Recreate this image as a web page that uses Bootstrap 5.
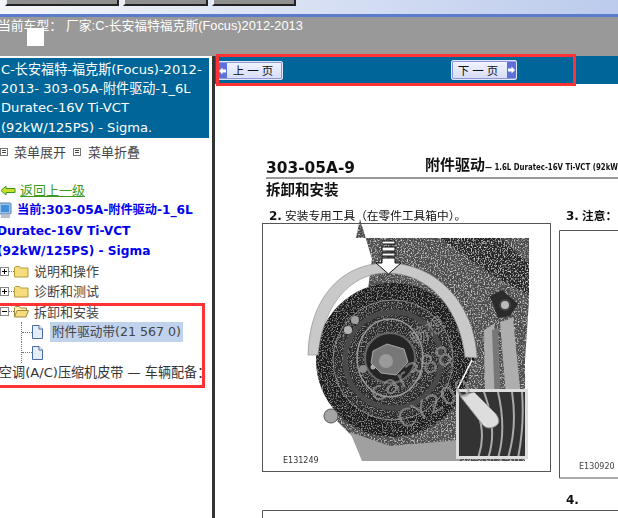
<!DOCTYPE html>
<html lang="zh">
<head>
<meta charset="utf-8">
<title>维修手册</title>
<link href="https://cdn.jsdelivr.net/npm/bootstrap@5.3.0/dist/css/bootstrap.min.css" rel="stylesheet">
<style>
html,body{margin:0;height:518px;overflow:hidden;background:#fff}
body{font-family:"DejaVu Sans","Noto Sans CJK SC",sans-serif;font-size:13px;color:#333;position:relative}
.topstrip{height:14px;background:linear-gradient(90deg,#f4f6fc,#bccbec)}
.topkey{height:6px;background:#8f8f8f;border:2px solid #222;border-top:0;border-left-color:#eee}
.k1{width:114px;margin-left:5px}.k2{width:85px;margin-left:4px}.k3{width:84px;margin-left:4px}
.rule{height:3px;background:#5a7ccb}
.graybar{height:39px;background:#999;color:#fff;font-size:12.8px;font-family:"Liberation Sans","Noto Sans CJK SC",sans-serif;padding:1px 0 0 0;margin:0;line-height:16px;position:relative;white-space:nowrap}
.graybar span{margin-left:-2px;display:inline-block}
.vendor{margin-left:-1px!important;padding-left:5px}
.whitebox{width:17px;height:18px;background:#fff;position:absolute;left:27px;top:11px}
.mainrow{height:462px}
.sidepane{width:212px;flex:none;overflow:hidden}
.sep{width:3px;flex:none;background:#333}
.titlebox{background:#069;color:#fff;width:209px;height:80px;margin-top:2px;font-size:13.1px;line-height:19.2px;padding:2px 0 0 1px;white-space:nowrap}
.menurow{height:26px;font-size:13px;color:#444;padding-top:1px;font-family:"Noto Sans CJK SC",sans-serif}
.menubox{width:8px;height:8px;border:1px solid #777;flex:none;background:linear-gradient(#444,#444) 1px 1px/4px 1px no-repeat,linear-gradient(#444,#444) 1px 3px/4px 1px no-repeat}
.menugap{margin-left:7px}
.lbl1{margin-left:6px}.lbl2{margin-left:7px}
.treebox{margin-top:16px;line-height:20.4px;white-space:nowrap}
.backlink{color:#3d9a1c;text-decoration:underline;font-family:"Noto Sans CJK SC",sans-serif}
.curtxt{color:#00e;font-weight:700;font-size:12.2px}
.curline{margin-left:-3px}
.nodetxt{color:#444;font-family:"Noto Sans CJK SC",sans-serif;font-size:13px;margin-left:5px}
.selnode{background:#c1d2ec;padding:0 2px;line-height:20px;margin-left:7px;font-family:"DejaVu Sans","Noto Sans CJK SC",sans-serif;font-size:12.6px}
.cutline{margin-left:-1px;color:#333;font-family:"DejaVu Sans","Noto Sans CJK SC",sans-serif;font-size:13.1px}
.twisty{width:9px;height:9px;border:1px solid #888;background:#fff;flex:none;position:relative}
.twisty::before{content:"";position:absolute;left:1px;right:1px;top:3px;height:1px;background:#000}
.twisty.plus::after{content:"";position:absolute;top:1px;bottom:1px;left:3px;width:1px;background:#000}
.dots{border-top:1px dotted #777;width:5px;flex:none}
.treerow{height:20.3px}
.indent{width:11px;height:20.3px;flex:none;border-left:1px dotted #777;margin-left:21px;position:relative}
.indent::after{content:"";position:absolute;left:0;top:10px;width:10px;border-top:1px dotted #777}
.docpane{flex:1;min-width:0;overflow:hidden}
.navstrip{height:28px;background:#069}
.pagebtn{--bs-btn-padding-y:0;--bs-btn-padding-x:0;--bs-btn-border-radius:2px;width:66px;height:19px;font-size:11.5px;line-height:17px;color:#111;border:1px solid #dfe6fa;background:linear-gradient(#f2f4ff,#d6dcfa);font-family:"Noto Sans CJK SC",sans-serif;letter-spacing:3px;display:flex;align-items:center;justify-content:center;position:relative;box-shadow:inset 0 0 0 1px #8b97d8}
.pagebtn:hover{color:#111}
.pbtn1{margin-left:2px;margin-top:5px;padding-left:9px}
.pbtn2{margin-left:168px;margin-top:4px;height:20px;padding-right:9px}
.arrowcap{position:absolute;top:1px;bottom:1px;width:9px;background:#5d6fd8;display:flex;align-items:center;justify-content:center}
.capl{left:0}.capr{right:0}
.pagepic{display:block;filter:blur(.35px)}
.pagepic text{font-family:"DejaVu Sans","Noto Sans CJK SC",sans-serif;fill:#111}
.pagepic .cjk{font-family:"Noto Sans CJK SC",sans-serif}
.redframe{position:absolute;border:3px solid #f33;pointer-events:none}
.rf1{left:216px;top:54px;width:360px;height:32px}
.rf2{left:-3px;top:303px;width:208px;height:85px}
</style>
</head>
<body>
<div class="topstrip d-flex align-items-start">
  <div class="topkey k1"></div><div class="topkey k2"></div><div class="topkey k3"></div>
</div>
<div class="rule"></div>
<div class="graybar"><span>当前车型：</span><span class="vendor">厂家:C-长安福特福克斯(Focus)2012-2013</span><div class="whitebox"></div></div>

<div class="mainrow d-flex">
  <div class="sidepane">
    <div class="titlebox">C-长安福特-福克斯(Focus)-2012-<br>2013- 303-05A-附件驱动-1_6L<br>Duratec-16V Ti-VCT<br>(92kW/125PS) - Sigma.</div>
    <div class="menurow d-flex align-items-center">
      <span class="menubox"></span><span class="lbl1">菜单展开</span>
      <span class="menubox menugap"></span><span class="lbl2">菜单折叠</span>
    </div>
    <div class="treebox">
      <div class="d-flex align-items-center treerow">
        <svg width="16" height="11" viewBox="0 0 16 11"><path d="M1 5.500 6 1v2.500h9v4H6V10z" fill="#c9df2e" stroke="#3c9a16"/></svg>
        <a class="backlink ms-1" href="#">返回上一级</a>
      </div>
      <div class="d-flex align-items-center treerow curline">
        <svg width="16" height="17" viewBox="0 0 16 17"><rect x="2" y="1" width="12" height="11" rx="1" fill="#9fc3ea" stroke="#5d7fa8"/><rect x="4" y="3" width="8" height="7" fill="#3f8fdc"/><rect x="4" y="13" width="9" height="3" fill="#b9c2cc"/></svg>
        <span class="curtxt ms-1">当前:303-05A-附件驱动-1_6L</span>
      </div>
      <div class="curtxt curline treerow">Duratec-16V Ti-VCT</div>
      <div class="curtxt curline treerow">(92kW/125PS) - Sigma</div>
      <div class="d-flex align-items-center treerow">
        <span class="twisty plus"></span><span class="dots"></span>
        <svg width="15" height="13" viewBox="0 0 15 13"><path d="M.5 12V2.500l1-1h4l1 1.500h7.500V12z" fill="#f6dc7c" stroke="#b49a3c"/></svg>
        <span class="nodetxt">说明和操作</span>
      </div>
      <div class="d-flex align-items-center treerow">
        <span class="twisty plus"></span><span class="dots"></span>
        <svg width="15" height="13" viewBox="0 0 15 13"><path d="M.5 12V2.500l1-1h4l1 1.500h7.500V12z" fill="#f6dc7c" stroke="#b49a3c"/></svg>
        <span class="nodetxt">诊断和测试</span>
      </div>
      <div class="d-flex align-items-center treerow">
        <span class="twisty"></span><span class="dots"></span>
        <svg width="15" height="13" viewBox="0 0 15 13"><path d="M.5 12V2.500l1-1h4l1 1.500h6v2" fill="#fbeeb0" stroke="#9c8a40"/><path d="M.5 12l2.500-6.500h11.500L12 12z" fill="#f6dc7c" stroke="#9c8a40"/></svg>
        <span class="nodetxt">拆卸和安装</span>
      </div>
      <div class="d-flex align-items-center treerow">
        <span class="indent"></span>
        <svg width="11" height="14" viewBox="0 0 11 14"><path d="M.5.500h6.500l3.500 3.500v9.500H.5z" fill="#e4edfa" stroke="#4a6aa0"/><path d="M7 .5V4h3.500" fill="#fff" stroke="#4a6aa0"/></svg>
        <span class="nodetxt selnode">附件驱动带(21 567 0)</span>
      </div>
      <div class="d-flex align-items-center treerow">
        <span class="indent"></span>
        <svg width="11" height="14" viewBox="0 0 11 14"><path d="M.5.500h6.500l3.500 3.500v9.500H.5z" fill="#e4edfa" stroke="#4a6aa0"/><path d="M7 .5V4h3.500" fill="#fff" stroke="#4a6aa0"/></svg>
      </div>
      <div class="cutline treerow">空调(A/C)压缩机皮带 — 车辆配备：</div>
    </div>
  </div>
  <div class="sep"></div>
  <div class="docpane">
    <div class="navstrip d-flex align-items-start">
      <a class="btn pagebtn pbtn1" href="#"><span class="arrowcap capl"><svg width="7" height="8" viewBox="0 0 7 8"><path d="M0 4l3.500-3.500V2.500H7v3H3.500v2z" fill="#fff"/></svg></span>上一页</a>
      <a class="btn pagebtn pbtn2" href="#">下一页<span class="arrowcap capr"><svg width="7" height="8" viewBox="0 0 7 8"><path d="M7 4L3.500.5v2H0v3h3.500v2z" fill="#fff"/></svg></span></a>
    </div>
    <svg class="pagepic" width="403" height="434" viewBox="215 84 403 434" xmlns="http://www.w3.org/2000/svg">
      <defs>
        <filter id="speck" x="0" y="0" width="100%" height="100%">
          <feTurbulence type="fractalNoise" baseFrequency=".7" numOctaves="2" seed="4" result="n"/>
          <feColorMatrix in="n" type="matrix" values="0 0 0 0 .7  0 0 0 0 .7  0 0 0 0 .7  3 0 0 0 -1.500" result="w"/>
          <feComposite in="w" in2="SourceAlpha" operator="in" result="wc"/>
          <feMerge><feMergeNode in="SourceGraphic"/><feMergeNode in="wc"/></feMerge>
        </filter>
        <filter id="speckfine" x="0" y="0" width="100%" height="100%">
          <feTurbulence type="fractalNoise" baseFrequency=".8" numOctaves="2" seed="9" result="n"/>
          <feColorMatrix in="n" type="matrix" values="0 0 0 0 .38  0 0 0 0 .38  0 0 0 0 .38  3 0 0 0 -1.500" result="w"/>
          <feComposite in="w" in2="SourceAlpha" operator="in" result="wc"/>
          <feMerge><feMergeNode in="SourceGraphic"/><feMergeNode in="wc"/></feMerge>
        </filter>
        <clipPath id="inset"><rect x="459" y="392" width="67" height="64"/></clipPath>
      </defs>
      <text x="266" y="173" font-size="16.500" font-weight="700" textLength="89" lengthAdjust="spacingAndGlyphs">303-05A-9</text>
      <text x="425" y="170" font-size="15" font-weight="700" class="cjk">附件驱动</text>
      <text x="485" y="170" font-size="8" font-weight="700" textLength="133" lengthAdjust="spacingAndGlyphs">— 1.6L Duratec-16V Ti-VCT (92kW</text>
      <path d="M266 178H618" stroke="#333"/>
      <text x="266" y="195" font-size="14.500" font-weight="700" class="cjk">拆卸和安装</text>
      <text x="269" y="220" font-size="12" font-weight="700">2.</text>
      <text x="285" y="220" font-size="11.700" class="cjk">安装专用工具（在零件工具箱中）。</text>
      <text x="566" y="220" font-size="12" font-weight="700">3.</text>
      <text x="582" y="220" font-size="11.700" font-weight="700" class="cjk">注意：</text>
      <rect x="262.500" y="223.500" width="288" height="248" fill="#fff" stroke="#555"/>
      <path d="M618 230.500H559.500V478H618" fill="none" stroke="#555"/>

      <!-- engine picture -->
      <g filter="url(#speck)">
        <path d="M356 238H529V300l-4 60v101H375l-12-10-8-12-20-20 25-70 12-90-12-40z" fill="#4e4e4e"/>
        <path d="M440 238h60l29 25v32l-40-22-30-22z" fill="#262626"/>
      </g>
      <path d="M484 330l10-6 12 130h-20zM500 322l13-4 14 140h-16z" fill="#aeaeae"/>
      <path d="M492 330l6-2 5 125h-6z" fill="#777"/>
      <path d="M350 432l40 14 70-6 0 21H362z" fill="#a0a0a0"/>
      <g filter="url(#speckfine)">
        <circle cx="393" cy="360" r="77" fill="#1e1e1e"/>
        <circle cx="393" cy="360" r="60" fill="#2a2a2a" stroke="#888"/>
      </g>
      <circle cx="393" cy="360" r="48" fill="none" stroke="#4a4a4a" stroke-width="5"/>
      <ellipse cx="390" cy="358" rx="33" ry="39" fill="none" stroke="#999" stroke-width="1.500"/>
      <circle cx="390" cy="358" r="25" fill="#252525" stroke="#666" stroke-width="2"/>
      <circle cx="355" cy="320" r="4" fill="#a0a0a0"/><circle cx="348" cy="330" r="4" fill="#b4b4b4"/><circle cx="363" cy="369" r="4" fill="#8c8c8c"/><circle cx="373" cy="367" r="2.500" fill="#aaa"/>
      <path d="M373 351l14-7 17 5 4 13-12 13-15-2-10-10z" fill="#777" stroke="#bdbdbd" stroke-width=".8"/>
      <circle cx="386" cy="361" r="7" fill="#9a9a9a"/>
      <path d="M490 296l12-6 16 14-8 12-12 2z" fill="#2b2b2b"/>
      <circle cx="505" cy="305" r="5" fill="#bbb" stroke="#444" stroke-width="2"/>
      <circle cx="331" cy="416" r="7" fill="#a4a4a4" stroke="#555"/>
      <!-- guard arc -->
      <path d="M308 355C309 300 340 263 387 263c50 0 88 42 90 95l-12-1C460 310 430 272 385 273 350 274 323 305 318 355z" fill="#c9c9c9" stroke="#8a8a8a" stroke-width=".6"/>
      <!-- down arrow -->
      <path d="M382 241h13v3h-13zM382 247h13v4h-13zM382 253h13v3h-13zM382 258h13v5h6l-12.500 11L376 263h6z" fill="#fff" stroke="#111"/>
      <path d="M473 358 457 390" stroke="#fff" stroke-width="1.600"/><circle cx="473" cy="359" r="1.500" fill="#111"/>
      <!-- inset -->
      <rect x="457.500" y="390.500" width="69" height="67" fill="#333" stroke="#ddd" stroke-width="3"/>
      <g clip-path="url(#inset)">
        <path d="M478 458c8-22 4-44-12-66M488 458c8-22 4-44-4-66M498 458c6-20 6-40 0-66M508 458c6-20 8-40 4-66M518 458c4-20 6-40 4-66" fill="none" stroke="#aaa" stroke-width="2"/>
        <path d="M460 396l14-4 22 22c4 6 4 10-2 13-5 2-9 1-12-3z" fill="#ddd" stroke="#888"/>
      </g>
      <!-- watermark -->
      <g>
        <text x="415" y="347" transform="rotate(-32 415 347)" font-size="19" style="fill:#a5a5a5;fill-opacity:.65">畅想</text>
        <text x="375" y="403" transform="rotate(-28 375 403)" font-size="26" style="fill:#9c9c9c;fill-opacity:.65">car388</text>
        <text x="403" y="430" transform="rotate(-28 403 430)" font-size="25" style="fill:#9c9c9c;fill-opacity:.65">CY200</text>
      </g>
      <text x="283" y="463" font-size="8" style="fill:#333">E131249</text>
      <text x="579" y="469" font-size="8" style="fill:#444">E130920</text>
      <text x="566" y="504" font-size="12" font-weight="700">4.</text>
      <path d="M618 510.500H262.500V518" fill="none" stroke="#555"/>
    </svg>
  </div>
</div>
<div class="redframe rf1"></div>
<div class="redframe rf2"></div>
</body>
</html>
